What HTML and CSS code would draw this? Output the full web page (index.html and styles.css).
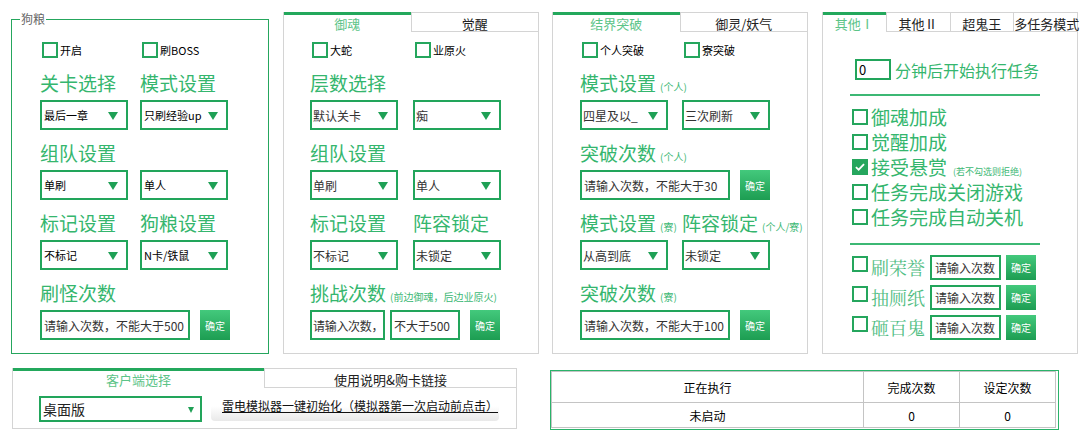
FILE: index.html
```html
<!DOCTYPE html>
<html lang="zh-CN">
<head>
<meta charset="utf-8">
<title>设置面板</title>
<link rel="stylesheet" href="styles.css">
</head>
<body>
<div class="page">
  <div class="top">
    <fieldset class="group">
      <legend>狗粮</legend>
      <div class="body b1">
        <div class="row cbrow">
          <label class="cb"><span class="box"></span>开启</label>
          <label class="cb"><span class="box"></span>刷BOSS</label>
        </div>
        <div class="row hrow"><div class="h">关卡选择</div><div class="h">模式设置</div></div>
        <div class="row frow">
          <div class="sel"><span>最后一章</span><i class="tri"></i></div>
          <div class="sel"><span>只刷经验up</span><i class="tri"></i></div>
        </div>
        <div class="row hrow"><div class="h">组队设置</div></div>
        <div class="row frow">
          <div class="sel"><span>单刷</span><i class="tri"></i></div>
          <div class="sel"><span>单人</span><i class="tri"></i></div>
        </div>
        <div class="row hrow"><div class="h">标记设置</div><div class="h">狗粮设置</div></div>
        <div class="row frow">
          <div class="sel"><span>不标记</span><i class="tri"></i></div>
          <div class="sel"><span>N卡/铁鼠</span><i class="tri"></i></div>
        </div>
        <div class="row hrow"><div class="h">刷怪次数</div></div>
        <div class="row frow fi">
          <div class="inp w150">请输入次数，不能大于500</div>
          <button class="btn">确定</button>
        </div>
      </div>
    </fieldset>

    <section class="tabpanel p2">
      <div class="tabs"><div class="tab on">御魂</div><div class="tab">觉醒</div></div>
      <div class="body b2">
        <div class="row cbrow">
          <label class="cb"><span class="box"></span>大蛇</label>
          <label class="cb"><span class="box"></span>业原火</label>
        </div>
        <div class="row hrow"><div class="h">层数选择</div></div>
        <div class="row frow">
          <div class="sel"><span>默认关卡</span><i class="tri"></i></div>
          <div class="sel"><span>痴</span><i class="tri"></i></div>
        </div>
        <div class="row hrow"><div class="h">组队设置</div></div>
        <div class="row frow">
          <div class="sel"><span>单刷</span><i class="tri"></i></div>
          <div class="sel"><span>单人</span><i class="tri"></i></div>
        </div>
        <div class="row hrow"><div class="h">标记设置</div><div class="h">阵容锁定</div></div>
        <div class="row frow">
          <div class="sel"><span>不标记</span><i class="tri"></i></div>
          <div class="sel"><span>未锁定</span><i class="tri"></i></div>
        </div>
        <div class="row hrow"><div class="h">挑战次数<small>(前边御魂，后边业原火)</small></div></div>
        <div class="row frow fi2">
          <div class="inp w75">请输入次数，</div>
          <div class="inp w70">不大于500</div>
          <button class="btn">确定</button>
        </div>
      </div>
    </section>

    <section class="tabpanel p3">
      <div class="tabs"><div class="tab on">结界突破</div><div class="tab">御灵/妖气</div></div>
      <div class="body b3">
        <div class="row cbrow">
          <label class="cb"><span class="box"></span>个人突破</label>
          <label class="cb"><span class="box"></span>寮突破</label>
        </div>
        <div class="row hrow"><div class="h">模式设置<small>(个人)</small></div></div>
        <div class="row frow">
          <div class="sel"><span>四星及以_</span><i class="tri"></i></div>
          <div class="sel"><span>三次刷新</span><i class="tri"></i></div>
        </div>
        <div class="row hrow"><div class="h">突破次数<small>(个人)</small></div></div>
        <div class="row frow fi">
          <div class="inp w150">请输入次数，不能大于30</div>
          <button class="btn">确定</button>
        </div>
        <div class="row hrow"><div class="h">模式设置<small>(寮)</small></div><div class="h">阵容锁定<small>(个人/寮)</small></div></div>
        <div class="row frow">
          <div class="sel"><span>从高到底</span><i class="tri"></i></div>
          <div class="sel"><span>未锁定</span><i class="tri"></i></div>
        </div>
        <div class="row hrow"><div class="h">突破次数<small>(寮)</small></div></div>
        <div class="row frow fi">
          <div class="inp w150">请输入次数，不能大于100</div>
          <button class="btn">确定</button>
        </div>
      </div>
    </section>

    <section class="tabpanel p4">
      <div class="tabs"><div class="tab on">其他Ⅰ</div><div class="tab">其他Ⅱ</div><div class="tab">超鬼王</div><div class="tab">多任务模式</div></div>
      <div class="body b4">
        <div class="timer"><div class="tinp">0</div><span>分钟后开始执行任务</span></div>
        <div class="sep"></div>
        <div class="checks">
          <label class="ck"><span class="box"></span><span class="t">御魂加成</span></label>
          <label class="ck"><span class="box"></span><span class="t">觉醒加成</span></label>
          <label class="ck"><span class="box on"><svg viewBox="0 0 16 16" width="12" height="12"><path d="M2.5 8.2 L6.2 11.6 L13.4 4.2" fill="none" stroke="#fff" stroke-width="2.4"/></svg></span><span class="t">接受悬赏<small>(若不勾选则拒绝)</small></span></label>
          <label class="ck"><span class="box"></span><span class="t">任务完成关闭游戏</span></label>
          <label class="ck"><span class="box"></span><span class="t">任务完成自动关机</span></label>
        </div>
        <div class="sep sep2"></div>
        <div class="counts">
          <div class="cnt"><span class="box"></span><span class="cl">刷荣誉</span><div class="inp">请输入次数</div><button class="btn">确定</button></div>
          <div class="cnt"><span class="box"></span><span class="cl">抽厕纸</span><div class="inp">请输入次数</div><button class="btn">确定</button></div>
          <div class="cnt"><span class="box"></span><span class="cl">砸百鬼</span><div class="inp">请输入次数</div><button class="btn">确定</button></div>
        </div>
      </div>
    </section>
  </div>

  <div class="bottom">
    <section class="client">
      <div class="tabs"><div class="tab on">客户端选择</div><div class="tab">使用说明&amp;购卡链接</div></div>
      <div class="cbody">
        <div class="bsel"><span>桌面版</span><i class="tri sm"></i></div>
        <div class="link">雷电模拟器一键初始化（模拟器第一次启动前点击）</div>
      </div>
    </section>
    <div class="stat">
      <table>
        <colgroup><col class="c1"><col class="c2"><col class="c3"></colgroup>
        <tr class="r1"><td>正在执行</td><td>完成次数</td><td>设定次数</td></tr>
        <tr class="r2"><td>未启动</td><td>0</td><td>0</td></tr>
      </table>
    </div>
  </div>
</div>
</body>
</html>
```
FILE: styles.css
```css
* { box-sizing: border-box; margin: 0; padding: 0; }
body {
  margin: 0;
  background: #fff;
  color: #222;
  font-family: "Noto Sans CJK SC", "Noto Sans", sans-serif;
}
.page { width: 1090px; height: 440px; padding: 12px 0 0 11px; overflow: hidden; }
.top { display: flex; align-items: flex-start; }

/* group box */
.group {
  width: 258px; height: 342px;
  border: 1px solid #25a65d;
  margin-right: 14px;
  min-width: 0;
  padding: 0;
}
.group legend {
  font-size: 12px; line-height: 14px; color: #666;
  margin-left: 8px; padding: 0 1px;
}

/* tab panels */
.tabpanel {
  width: 256px; height: 342px;
  border: 1px solid #d4d4d4; border-top: 0;
  display: flex; flex-direction: column;
}
.p2 { margin-right: 13px; }
.p3 { margin-right: 14px; }
.tabs { display: flex; height: 20px; flex: none; }
.tab {
  flex: 1 1 0; min-width: 0;
  border-top: 1px solid #d4d4d4; border-bottom: 1px solid #d4d4d4;
  font-size: 13px; line-height: 15px; padding-top: 3px;
  text-align: center; color: #222; white-space: nowrap;
}
.tab + .tab { border-left: 1px solid #d4d4d4; }
.tab.on {
  border-top: 3px solid #23a85c;
  border-bottom-color: transparent;
  color: #5cc488; padding-top: 1px;
}

/* bodies */
.body { flex: 1; display: flex; flex-direction: column; }
.b1 { padding: 16px 0 0 28px; --g: 12px; }
.b2 { padding: 10px 0 0 26px; --g: 15px; }
.b3 { padding: 10px 0 0 27px; --g: 14px; }

.row { display: flex; column-gap: var(--g); flex: none; }
.cbrow { height: 16px; margin-bottom: 13px; padding-left: 2px; }
.hrow { height: 24px; margin-bottom: 5px; }
.frow { height: 30px; margin-bottom: 11px; }
.fi { column-gap: 10px; }
.fi2 { column-gap: 5px; }
.fi2 .btn { margin-left: 5px; }

.h {
  width: 88px; flex: none; white-space: nowrap;
  font-size: 19px; line-height: 24px; color: #35b66e;
}
.h small { font-size: 10px; margin-left: 4px; color: #3cb874; }

.cb {
  width: 88px; flex: none; display: flex; align-items: center; gap: 2px;
  font-size: 11px; color: #000; white-space: nowrap;
}
.box { width: 16px; height: 16px; border: 2px solid #25a65d; background: #fff; flex: none; display: flex; align-items: center; justify-content: center; }
.box.on { background: #25a65d; }

.sel {
  width: 88px; height: 30px; flex: none;
  border: 2px solid #22a55b;
  display: flex; align-items: center; justify-content: space-between;
  padding: 0 8px 0 2px;
  font-size: 11px; color: #000; white-space: nowrap;
}
.b2 .sel, .b3 .sel { font-size: 12px; color: #333; padding-left: 1px; }
.tri {
  width: 0; height: 0; flex: none;
  border-left: 5px solid transparent; border-right: 5px solid transparent;
  border-top: 8px solid #1fa055;
  margin-top: 2px;
}
.tri.sm { border-left-width: 3px; border-right-width: 3px; border-top-width: 6px; }

.inp {
  height: 30px; flex: none;
  border: 2px solid #22a55b;
  display: flex; align-items: center;
  padding-left: 2px;
  font-size: 12px; color: #333; white-space: nowrap; overflow: hidden;
}
.w150 { width: 150px; }
.w75 { width: 75px; padding-left: 1px; letter-spacing: -0.3px; }
.w70 { width: 70px; }
.btn {
  width: 30px; height: 30px; flex: none; border: 0;
  background: linear-gradient(#43c97c, #1d9d52);
  color: #fff; font-family: inherit; font-size: 10px;
}

/* panel 4 */
.b4 { padding: 27px 0 0 27px; }
.timer { display: flex; align-items: center; height: 21px; padding-left: 5px; flex: none; }
.tinp {
  width: 36px; height: 21px; border: 2px solid #22a55b;
  font-size: 13px; line-height: 17px; padding-left: 2px; color: #000;
}
.timer span { font-size: 16px; color: #35b66e; margin-left: 4px; white-space: nowrap; }
.sep { width: 190px; height: 2px; background: #3cb874; margin-top: 14px; flex: none; }
.checks { margin-top: 8px; padding-left: 2px; flex: none; }
.ck { display: flex; align-items: center; height: 25px; white-space: nowrap; }
.ck .box { margin-right: 3px; }
.ck .t { font-size: 19px; line-height: 25px; color: #35b66e; }
.ck small { font-size: 9px; line-height: 1; margin-left: 6px; color: #3cb874; }
.sep2 { margin-top: 14px; }
.counts { margin-top: 10px; padding-left: 2px; display: flex; flex-direction: column; gap: 5px; flex: none; }
.cnt { display: flex; align-items: flex-start; height: 25px; }
.cnt .box { margin-top: 1px; margin-right: 3px; }
.cl {
  width: 57px; margin-right: 2px; flex: none;
  font-family: "Noto Serif CJK SC", "Noto Sans CJK SC", serif;
  font-size: 18px; line-height: 25px; color: #4fbd82; white-space: nowrap;
}
.cnt .inp { width: 71px; height: 25px; margin-right: 5px; padding-left: 3px; }
.cnt .btn { height: 25px; }

/* bottom row */
.bottom { display: flex; align-items: flex-start; margin-top: 14px; margin-left: 1px; }
.client {
  width: 505px; height: 61px; flex: none;
  border: 1px solid #d4d4d4; border-top: 0;
  display: flex; flex-direction: column;
}
.cbody { display: flex; align-items: flex-start; padding: 8px 0 0 26px; }
.bsel {
  width: 163px; height: 26px; flex: none;
  border: 2px solid #22a55b;
  display: flex; align-items: center; justify-content: space-between;
  padding: 0 6px 0 2px;
  font-size: 14px; color: #222;
}
.link {
  margin-left: 9px; margin-top: 2px;
  width: 288px; height: 23px; border-radius: 4px;
  background: linear-gradient(#fff 0%, #fff 35%, #e9e9e9 100%);
  font-size: 12px; line-height: 16px; color: #111;
  text-decoration: underline; padding-left: 11px; white-space: nowrap;
}
.stat {
  margin-left: 33px; margin-top: 2px;
  width: 509px; height: 60px; flex: none;
  border: 1px solid #2ab36a;
  padding: 0 2px 1px 0;
}
.stat table {
  border-collapse: collapse; table-layout: fixed;
  width: 505px; height: 57px;
  font-size: 12px; color: #000;
}
.stat col.c1 { width: 312px; }
.stat col.c2 { width: 96px; }
.stat col.c3 { width: 96px; }
.stat td { border: 1px solid #c4c4c4; text-align: center; padding: 0; }
.stat tr.r1 { height: 31px; }
.stat tr.r2 { height: 25px; }
```
